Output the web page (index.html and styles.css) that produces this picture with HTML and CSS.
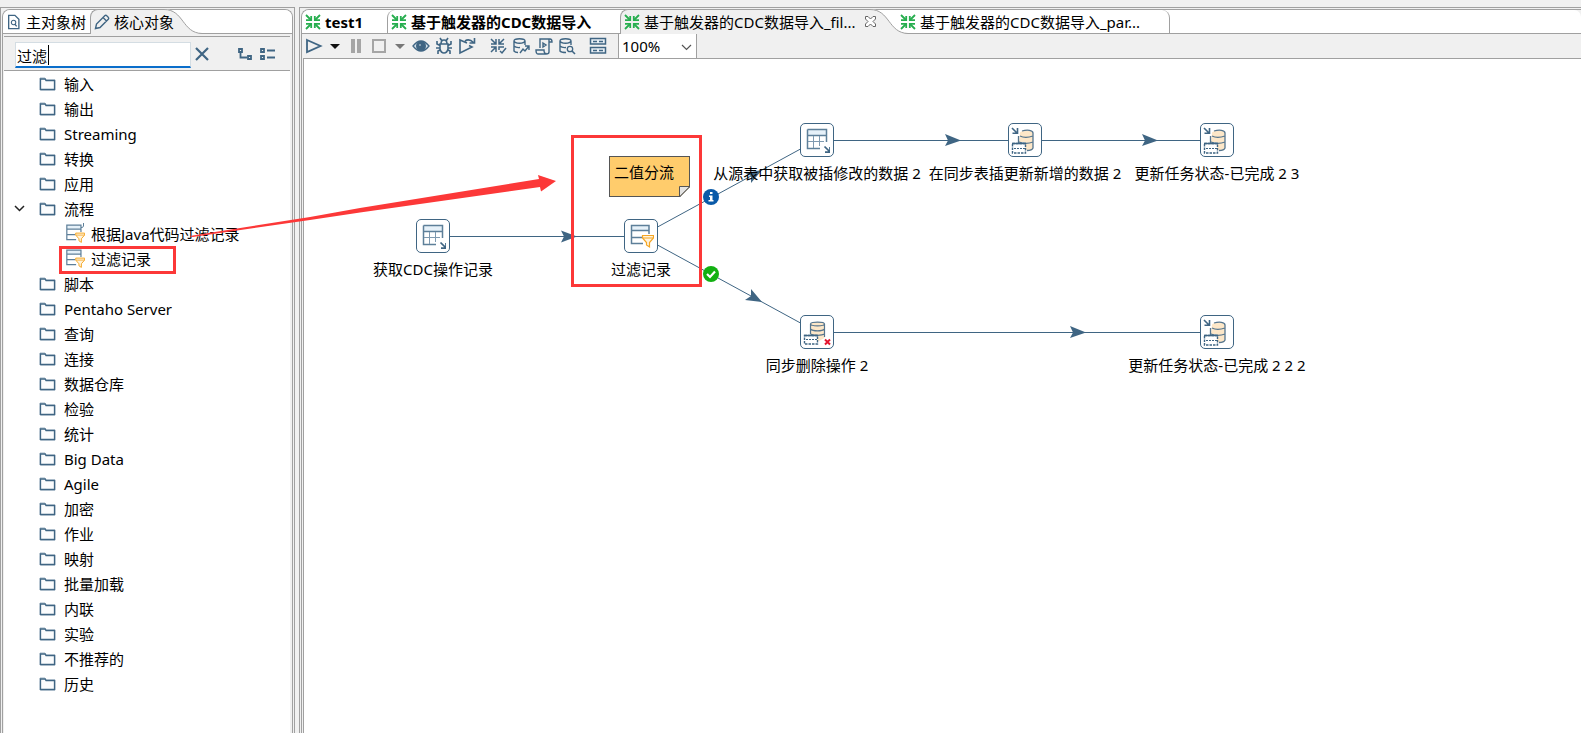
FILE: index.html
```html
<!DOCTYPE html>
<html lang="zh-CN">
<head>
<meta charset="utf-8">
<title>Spoon</title>
<link rel="stylesheet" href="styles.css">
</head>
<body>
<svg class="defs" aria-hidden="true">
  <symbol id="folder" viewBox="0 0 17 14"><path d="M1 3.500V1H6L7.500 3H16V13H1Z" fill="#fbfcfd" stroke="#9fb3c3" stroke-width="1"/><path d="M1.500 13V2H6L7 3.500H15.500V12.500H1.500" fill="none" stroke="#3f6583" stroke-width="1.300"/></symbol>
  <symbol id="xform" viewBox="0 0 16 16"><g fill="none" stroke="#27ae4f" stroke-width="1.800"><path d="M1 1L6 6M15 1L10 6M1 15L6 10M15 15L10 10"/><path d="M6.200 2V6.200H1M9.800 2V6.200H15M6.200 14V9.800H1M9.800 14V9.800H15"/></g></symbol>
  <symbol id="filter" viewBox="0 0 26 26"><path d="M3 2H21V17H16M15 20H3V2" fill="#fff" stroke="none"/><path d="M4 3H21V7H4Z" fill="#e6f1f9"/><path d="M21 11V2.500H3.500V20.500H15M3 7.500H21M3 14.500H14" fill="none" stroke="#5d7f99" stroke-width="1.500"/><path d="M14.500 12.500H25.500V15L21.500 19.500V24L18.500 22V19.500L14.500 15Z" fill="#fff3dd" stroke="#f5a623" stroke-width="1.200"/><path d="M15 15H25" stroke="#f5a623"/></symbol>
  <symbol id="tablein" viewBox="0 0 26 26"><path d="M4 3H22V8H4Z" fill="#e6f1f9"/><path d="M3.500 2.500H22.500V15M16 21.500H3.500V2.500M3.500 8.500H22.500" fill="none" stroke="#5d7f99" stroke-width="1.500"/><path d="M9.500 9V21M15.500 9V19M4 14.500H20" fill="none" stroke="#7f9ab0"/><path d="M20.500 19.500L25.500 24.500M26 20V25.200H21" fill="none" stroke="#3f6583" stroke-width="1.700"/></symbol>
  <symbol id="dbdelete" viewBox="0 0 30 30"><path d="M8.500 7C8.500 4.500 22.500 4.500 22.500 7V21L17 24H8.500Z" fill="#fde7c8"/><path d="M8.500 17V7C8.500 4.500 22.500 4.500 22.500 7V20M8.500 7C9 9.500 22 9.500 22.500 7M8.500 12C11 14.500 20 14.500 22.500 12M8.500 17C12 19 20 18.500 22.500 17" fill="none" stroke="#55758e" stroke-width="1.200"/><path d="M2 18H15.500V28H2Z" fill="#fff"/><path d="M2.500 18.500H15.500V27H2.500Z" fill="none" stroke="#3f6583" stroke-width="1.400" stroke-dasharray="2.500 1"/><path d="M2 18.500H16" stroke="#3f6583" stroke-width="1.500"/><path d="M4 22.500H15" stroke="#3f6583" stroke-dasharray="2 1"/><path d="M23 22.500L28 27.500M28 22.500L23 27.500" stroke="#e3152f" stroke-width="2"/></symbol>
  <symbol id="dbupdate" viewBox="0 0 30 30"><path d="M10 8C10 4.500 23 4.500 23 8V24C22 26 16 26 15 25V17H9Z" fill="#fde7c8"/><path d="M12 6C17 4.500 23 5 23 8V23C22 25.500 19 25.500 17 25.500M8.500 18V11M10 11C14 13 20 12 23 11M9 17C13 18.500 19 18.500 23 17" fill="none" stroke="#55758e" stroke-width="1.300"/><path d="M2 18H15V28H2Z" fill="#fff"/><path d="M2.500 18.500H15.500V28H2.500Z" fill="none" stroke="#3f6583" stroke-width="1.400" stroke-dasharray="2.500 1"/><path d="M2 18.500H16" stroke="#3f6583" stroke-width="1.500"/><path d="M4 23.500H15" stroke="#3f6583" stroke-dasharray="2 1"/><path d="M2 3L7 8M7.500 3V8.300H2.500" fill="none" stroke="#3f6583" stroke-width="1.600"/></symbol>
</svg>

<div class="app">
  <aside class="pane side">
    <div class="folder">
      <div class="tabs">
        <button class="tab tab-tree"><svg class="i16" viewBox="0 0 16 18"><path d="M2 1.500H9L13.500 6V16.500H2Z" fill="none" stroke="#3f6583" stroke-width="1.500"/><circle cx="7.500" cy="9.500" r="2.500" fill="none" stroke="#3f6583" stroke-width="1.200"/><path d="M9 11.500L11 14" stroke="#3f6583" stroke-width="1.500"/></svg>主对象树</button>
        <button class="tab tab-core on"><svg class="i16" viewBox="0 0 16 16"><path d="M1.500 14.500L2.500 10L11 1.500C12 .5 15.500 4 14.500 5L6 13.500ZM9 3.500L12.500 7" fill="none" stroke="#3f6583" stroke-width="1.400"/></svg>核心对象</button>
        <svg class="curve" viewBox="0 0 38 25"><path d="M0 0C20 0 18 24 38 24.500V25H0Z" fill="#f0f0f0"/><path d="M0 .5C20 .5 18 24 38 24.500" fill="none" stroke="#a0a0a0"/></svg>
      </div>
      <div class="side-body">
        <form class="search">
          <label class="field"><input type="text" value="过滤" aria-label="搜索"><span class="caret"></span></label>
          <button type="button" class="tool" aria-label="清除"><svg width="16" height="16" viewBox="0 0 16 16"><path d="M2 2L14 14M14 2L2 14" stroke="#3f6583" stroke-width="2.200"/></svg></button>
          <button type="button" class="tool expand" aria-label="展开"><svg width="16" height="14" viewBox="0 0 16 14"><path d="M2 2H5V5H2ZM11 9H14V12H11ZM3.500 6V10.500H10" fill="none" stroke="#3f6583" stroke-width="1.800"/></svg></button>
          <button type="button" class="tool" aria-label="折叠"><svg width="17" height="14" viewBox="0 0 17 14"><path d="M2 2H5V5H2ZM2 9H5V12H2ZM8 3.500H16M8 10.500H16" fill="none" stroke="#3f6583" stroke-width="1.800"/></svg></button>
        </form>
        <ul class="tree">
          <li><svg class="fold"><use href="#folder"/></svg>输入</li>
          <li><svg class="fold"><use href="#folder"/></svg>输出</li>
          <li><svg class="fold"><use href="#folder"/></svg>Streaming</li>
          <li><svg class="fold"><use href="#folder"/></svg>转换</li>
          <li><svg class="fold"><use href="#folder"/></svg>应用</li>
          <li class="open"><svg class="chev" viewBox="0 0 11 7"><path d="M1 1L5.500 5.500L10 1" fill="none" stroke="#222" stroke-width="1.500"/></svg><svg class="fold"><use href="#folder"/></svg>流程</li>
          <li class="child"><svg class="step"><use href="#filter"/><path d="M19.500 0V3Q19 5 17 4.500" fill="none" stroke="#5d7f99"/></svg>根据Java代码过滤记录</li>
          <li class="child marked"><svg class="step"><use href="#filter"/></svg>过滤记录</li>
          <li><svg class="fold"><use href="#folder"/></svg>脚本</li>
          <li><svg class="fold"><use href="#folder"/></svg>Pentaho Server</li>
          <li><svg class="fold"><use href="#folder"/></svg>查询</li>
          <li><svg class="fold"><use href="#folder"/></svg>连接</li>
          <li><svg class="fold"><use href="#folder"/></svg>数据仓库</li>
          <li><svg class="fold"><use href="#folder"/></svg>检验</li>
          <li><svg class="fold"><use href="#folder"/></svg>统计</li>
          <li><svg class="fold"><use href="#folder"/></svg>Big Data</li>
          <li><svg class="fold"><use href="#folder"/></svg>Agile</li>
          <li><svg class="fold"><use href="#folder"/></svg>加密</li>
          <li><svg class="fold"><use href="#folder"/></svg>作业</li>
          <li><svg class="fold"><use href="#folder"/></svg>映射</li>
          <li><svg class="fold"><use href="#folder"/></svg>批量加载</li>
          <li><svg class="fold"><use href="#folder"/></svg>内联</li>
          <li><svg class="fold"><use href="#folder"/></svg>实验</li>
          <li><svg class="fold"><use href="#folder"/></svg>不推荐的</li>
          <li><svg class="fold"><use href="#folder"/></svg>历史</li>
        </ul>
      </div>
    </div>
  </aside>

  <main class="pane work">
    <div class="folder">
      <div class="tabs">
        <button class="tab tab-test bold"><svg class="i16"><use href="#xform"/></svg>test1</button>
        <button class="tab tab-cdc bold"><svg class="i16"><use href="#xform"/></svg>基于触发器的CDC数据导入</button>
        <button class="tab tab-fil on"><svg class="i16"><use href="#xform"/></svg>基于触发器的CDC数据导入_fil...<svg class="close" viewBox="0 0 11 11"><path d="M.5 .5H3L5.500 3L8 .5H10.500V3L8 5.500L10.500 8V10.500H8L5.500 8L3 10.500H.5V8L3 5.500L.5 3Z" fill="#fff" stroke="#666"/></svg></button>
        <svg class="curve" viewBox="0 0 38 25"><path d="M0 0C20 0 18 24 38 24.500V25H0Z" fill="#f0f0f0"/><path d="M0 .5C20 .5 18 24 38 24.500" fill="none" stroke="#a0a0a0"/></svg>
        <button class="tab tab-par"><svg class="i16"><use href="#xform"/></svg>基于触发器的CDC数据导入_par...</button>
      </div>
      <div class="toolbar">
        <button class="tool" aria-label="运行"><svg width="18" height="18" viewBox="0 0 18 18"><path d="M2 3L15.500 9L2 15Z" fill="none" stroke="#3f6583" stroke-width="1.800"/></svg></button>
        <button class="tool near" aria-label="运行选项"><svg width="18" height="18" viewBox="0 0 18 18"><path d="M4 7H14L9 12Z" fill="#111"/></svg></button>
        <button class="tool near" aria-label="暂停"><svg width="18" height="18" viewBox="0 0 18 18"><path d="M4 2H8V16H4ZM10 2H14V16H10Z" fill="#a5a5a5"/></svg></button>
        <button class="tool" aria-label="停止"><svg width="18" height="18" viewBox="0 0 18 18"><path d="M3 3H15V15H3Z" fill="none" stroke="#a5a5a5" stroke-width="2"/></svg></button>
        <button class="tool near" aria-label="停止选项"><svg width="18" height="18" viewBox="0 0 18 18"><path d="M4 7H14L9 12Z" fill="#777"/></svg></button>
        <button class="tool near" aria-label="预览"><svg width="18" height="18" viewBox="0 0 18 18"><path d="M1 9Q9 -1 17 9Q9 19 1 9Z" fill="#d3e1eb" stroke="#3f6583" stroke-width="1.300"/><circle cx="9" cy="9" r="5" fill="#3f6583"/><circle cx="8" cy="8" r="1" fill="#fff" opacity=".5"/></svg></button>
        <button class="tool" aria-label="调试"><svg width="18" height="18" viewBox="0 0 18 18"><path d="M5 7H13V12Q12 16 9 16Q6 16 5 12ZM6 7Q6 3 9 3Q12 3 12 7M5 1L7 4M13 1L11 4M2 4V7L5 8.500M16 4V7L13 8.500M1 11H5M17 11H13M3 17V14L5 13M15 17V14L13 13" fill="none" stroke="#3f6583" stroke-width="1.600"/></svg></button>
        <button class="tool" aria-label="重放"><svg width="18" height="18" viewBox="0 0 18 18"><path d="M9 6L2 3V16L14 10L11 8.500M7 4Q11 1 15.500 5.500M16.500 1V6H11.500" fill="none" stroke="#3f6583" stroke-width="1.600"/></svg></button>
        <button class="tool far" aria-label="校验"><svg width="18" height="18" viewBox="0 0 18 18"><path d="M2 2L7 7M15 2L10 7M2 15L7 10M7 2V7H2M10 2V7H15M7 15V10H2M10 13V10H15M11 14L13 16L17 11" fill="none" stroke="#3f6583" stroke-width="1.500"/></svg></button>
        <button class="tool" aria-label="影响分析"><svg width="18" height="18" viewBox="0 0 18 18"><path d="M2 4C2 1 13 1 13 4V8M2 4V14Q3 15.500 6 15.500M2 4C3 7 12 7 13 4M2 9Q4 11 8 10.500M8 16L11 12L13 14L17 9M13 9H17V13" fill="none" stroke="#3f6583" stroke-width="1.400"/></svg></button>
        <button class="tool" aria-label="SQL"><svg width="18" height="18" viewBox="0 0 18 18"><path d="M5 11V2H15Q17 2 17 5H14M14 2V15Q14 17 11 17H3Q1 17 1 13H9Q9 17 11.500 16.500M8 6L11 8L8 10Z" fill="none" stroke="#3f6583" stroke-width="1.400"/></svg></button>
        <button class="tool" aria-label="浏览数据库"><svg width="18" height="18" viewBox="0 0 18 18"><path d="M2 4C2 1 13 1 13 4V8M2 4V14Q3 15.500 8 15.500M2 4C3 7 12 7 13 4M2 9Q4 11 8 10.500" fill="none" stroke="#3f6583" stroke-width="1.400"/><circle cx="12" cy="12" r="2.700" fill="none" stroke="#3f6583" stroke-width="1.300"/><path d="M14 14L17 17" stroke="#3f6583" stroke-width="1.600"/></svg></button>
        <button class="tool far" aria-label="结果"><svg width="18" height="18" viewBox="0 0 18 18"><path d="M1.500 1.500H16.500V7H1.500ZM1.500 10.500H16.500V16H1.500Z" fill="#e8eff5" stroke="#3f6583" stroke-width="1.500"/><path d="M4 4.500H8M10 4.500H14M4 13.500H8M10 13.500H14" stroke="#3f6583" stroke-width="1.500"/></svg></button>
        <div class="zoom"><select aria-label="缩放"><option>100%</option></select><svg class="zchev" viewBox="0 0 11 7"><path d="M1 1L5.500 5.500L10 1" fill="none" stroke="#555" stroke-width="1.200"/></svg></div>
      </div>
      <div class="canvas">
        <svg class="hops" width="1277" height="400" viewBox="304 59 1277 400">
          <g stroke="#3f6583" fill="none"><path d="M450 236.500H624M834 140.500H1008M1042 140.500H1200M834 332.500H1200"/><path d="M641 236L817 140M641 236L817 332" stroke-width="1"/></g>
          <g fill="#3f6583"><path d="M561 230.500L577 236.500L561 242.500L564 236.500Z"/><path d="M945 134L961 140.500L945 146L948 140.500Z"/><path d="M1142 134L1158 140.500L1142 146L1145 140.500Z"/><path d="M1070 326L1086 332.500L1070 338L1073 332.500Z"/><path d="M762 302L751 289L751 296L745 300Z"/><path d="M762 170L745 173L751 176L751 183Z"/></g>
        </svg>
        <div class="node n-get"><span class="box"><svg width="26" height="26"><use href="#tablein"/></svg></span><span class="cap">获取CDC操作记录</span></div>
        <div class="node n-filter"><span class="box"><svg width="26" height="26"><use href="#filter"/></svg></span><span class="cap">过滤记录</span></div>
        <div class="node n-src"><span class="box"><svg width="26" height="26"><use href="#tablein"/></svg></span><span class="cap">从源表中获取被插修改的数据 2</span></div>
        <div class="node n-sync"><span class="box"><svg width="30" height="30"><use href="#dbupdate"/></svg></span><span class="cap">在同步表插更新新增的数据 2</span></div>
        <div class="node n-done"><span class="box"><svg width="30" height="30"><use href="#dbupdate"/></svg></span><span class="cap">更新任务状态-已完成 2 3</span></div>
        <div class="node n-del"><span class="box"><svg width="30" height="30"><use href="#dbdelete"/></svg></span><span class="cap">同步删除操作 2</span></div>
        <div class="node n-done2"><span class="box"><svg width="30" height="30"><use href="#dbupdate"/></svg></span><span class="cap">更新任务状态-已完成 2 2 2</span></div>
        <div class="note">二值分流<svg class="fold-corner" viewBox="0 0 11 11"><path d="M.5 11V.5H11L.5 11Z" fill="#e4e4e4" stroke="#555"/><path d="M11 1V11H1Z" fill="#fff"/><path d="M.5 11L11 .5" stroke="#555"/></svg></div>
        <svg class="badge b-info" viewBox="0 0 16 16"><circle cx="8" cy="8" r="8" fill="#0a5aa8"/><path d="M7 3H9.500V5H7ZM6 6.500H9.500V11H10.500V12.500H5.500V11H7V8H6Z" fill="#fff"/></svg>
        <svg class="badge b-ok" viewBox="0 0 16 16"><circle cx="8" cy="8" r="8" fill="#12b012"/><path d="M4 8L7 11L12 5.500" fill="none" stroke="#fff" stroke-width="2.200"/></svg>
        <div class="frame"></div>
      </div>
    </div>
  </main>
  <svg class="pointer" width="560" height="250" viewBox="0 0 560 250"><path d="M190 236Q192 237.500 196 236.500L310 220L360 212.500L540 187L541 191.500L556 181L538 175L539 179L360 208L310 217L196 235Z" fill="#fc3838"/></svg>
</div>
</body>
</html>
```
FILE: styles.css
```css
*, *::before, *::after { box-sizing: border-box; }
body {
  margin: 0;
  background: #f0f0f0;
  color: #000;
  font: 15px/20px "Noto Sans", "Noto Sans CJK SC", sans-serif;
}
button, input, select { font: inherit; color: inherit; }
button { border: 0; background: none; padding: 0; margin: 0; }
ul { list-style: none; margin: 0; padding: 0; }
svg { display: block; flex: none; }
.defs { position: absolute; width: 0; height: 0; }

.app {
  position: relative;
  display: grid;
  grid-template-columns: 295px 1fr;
  gap: 4px;
  min-height: 100vh;
  padding-top: 7px;
  overflow: hidden;
}
.pane {
  display: flex;
  min-width: 0;
  border: 1px solid #a0a0a0;
  border-bottom: 0;
  padding: 1px 1px 0;
}
.work { border-right: 0; padding-right: 0; }
.folder {
  display: flex;
  flex: 1;
  flex-direction: column;
  min-width: 0;
  border: 1px solid #a0a0a0;
  border-bottom: 0;
  border-radius: 8px 8px 0 0;
}
.work .folder { border-right: 0; border-radius: 8px 0 0 0; }

.tabs {
  display: flex;
  height: 24px;
  background: #fff;
  border-bottom: 1px solid #a0a0a0;
  border-radius: 7px 7px 0 0;
}
.tab {
  position: relative;
  z-index: 1;
  display: flex;
  flex: none;
  align-items: center;
  gap: 4px;
  height: 23px;
  padding: 0 3px;
  white-space: nowrap;
}
.bold { font-weight: 700; }
.i16 { width: 16px; height: 16px; }
.on {
  height: 25px;
  margin-top: -1px;
  padding-bottom: 1px;
  background: #f0f0f0;
  border: 1px solid #a0a0a0;
  border-width: 1px 0 0 1px;
  border-radius: 8px 0 0 0;
}
.curve { width: 38px; height: 25px; margin-top: -1px; }
.tab-tree { width: 87px; }
.tab-core { width: 74px; }
.tab-test { width: 85px; }
.tab-cdc { width: 233px; border-left: 1px solid #a0a0a0; border-radius: 8px 0 0 0; }
.tab-fil { width: 250px; }
.tab-par {
  width: 273px;
  margin-left: -11px;
  border-right: 1px solid #a0a0a0;
  border-radius: 0 8px 0 0;
}
.close { width: 11px; height: 11px; margin-left: 5px; }

.side-body {
  display: flex;
  flex: 1;
  flex-direction: column;
  margin: 2px 2px 0 1px;
  border-top: 1px solid #a0a0a0;
  background: #fff;
}
.search {
  display: flex;
  align-items: center;
  height: 34px;
  padding-left: 11px;
  background: #f0f0f0;
  border-bottom: 1px solid #a0a0a0;
}
.field { position: relative; width: 176px; margin: 2px 3px 0 0; }
.field input {
  display: block;
  width: 100%;
  height: 26px;
  padding: 2px 1px 0;
  border: 1px solid #d4dde3;
  border-bottom: 2px solid #0a6ecb;
  background: #fff;
}
.caret { position: absolute; left: 33px; top: 3px; width: 1px; height: 20px; background: #000; }
.tool { display: flex; align-items: center; }
.expand { margin: 0 6px 0 27px; }

.tree { padding-left: 35px; }
.tree li { display: flex; align-items: center; gap: 8px; height: 25px; position: relative; }
.fold { width: 17px; height: 14px; }
.chev { position: absolute; left: -25px; top: 9px; width: 11px; height: 7px; }
.tree .child { padding-left: 25px; gap: 6px; }
.step { width: 21px; height: 21px; }
.marked::after {
  content: "";
  position: absolute;
  left: 20px;
  top: 0;
  width: 117px;
  height: 28px;
  border: 3px solid #fc3838;
}

.toolbar { display: flex; align-items: center; height: 24px; padding-left: 3px; gap: 5px; }
.near { margin-left: -2px; }
.far { margin-left: 8px; }
.zoom { position: relative; margin-left: 6px; align-self: stretch; }
.zoom select {
  appearance: none;
  display: block;
  width: 79px;
  height: 100%;
  padding: 0 3px;
  border: 1px solid #a0a0a0;
  border-width: 0 1px;
  border-radius: 0;
  background: #fff;
}
.zchev { position: absolute; right: 5px; top: 10px; width: 11px; height: 7px; }

.canvas {
  position: relative;
  flex: 1;
  margin-left: 1px;
  border: 1px solid #a0a0a0;
  border-width: 1px 0 0 1px;
  background: #fff;
  overflow: hidden;
}
.hops { position: absolute; left: 0; top: 0; }
.node { position: absolute; display: flex; flex-direction: column; align-items: center; gap: 6px; width: 34px; }
.box {
  display: flex;
  align-items: center;
  justify-content: center;
  width: 34px;
  height: 34px;
  background: #fff;
  border: 1px solid #3f6583;
  border-radius: 5px;
}
.cap { white-space: nowrap; }
.n-get { left: 112px; top: 160px; }
.n-filter { left: 320px; top: 160px; }
.n-src { left: 496px; top: 64px; }
.n-sync { left: 704px; top: 64px; }
.n-done { left: 896px; top: 64px; }
.n-del { left: 496px; top: 256px; }
.n-done2 { left: 896px; top: 256px; }
.note {
  position: absolute;
  left: 305px;
  top: 97px;
  width: 81px;
  height: 41px;
  padding: 5px 4px;
  background: #ffcc6c;
  border: 1px solid #555;
}
.fold-corner { position: absolute; right: -1px; bottom: -1px; width: 11px; height: 11px; }
.badge { position: absolute; left: 399px; width: 16px; height: 16px; }
.b-info { top: 130px; }
.b-ok { top: 207px; }
.frame { position: absolute; left: 267px; top: 76px; width: 131px; height: 152px; border: 3px solid #fc3838; }
.pointer { position: absolute; left: 0; top: 0; z-index: 2; pointer-events: none; }
```
